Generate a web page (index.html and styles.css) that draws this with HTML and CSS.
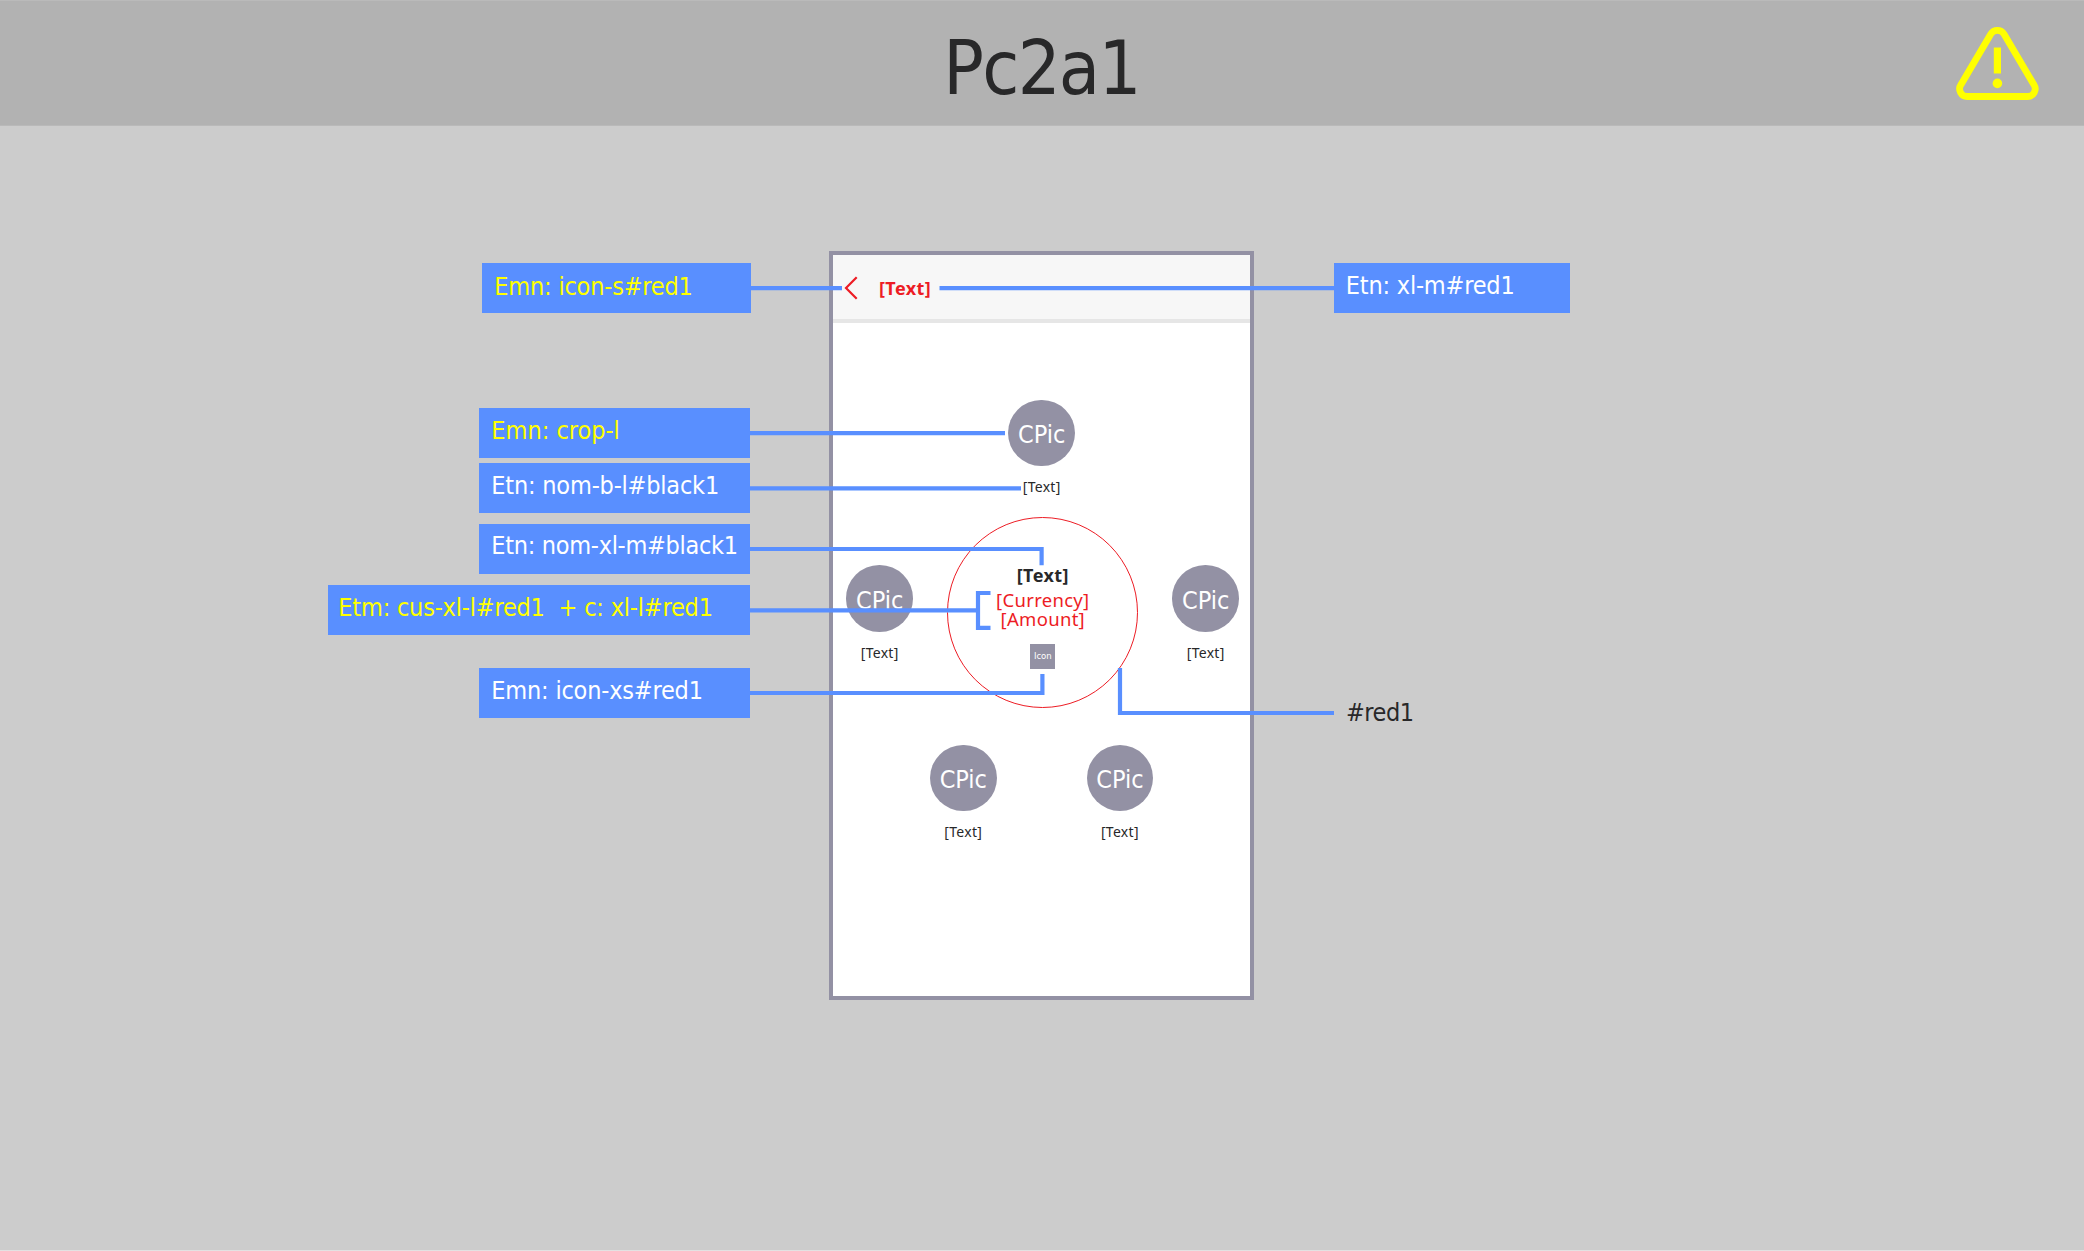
FILE: index.html
```html
<!DOCTYPE html>
<html lang="en">
<head>
<meta charset="utf-8">
<title>Pc2a1</title>
<link rel="stylesheet" href="styles.css">
</head>
<body>
<header class="topbar">
  <h1 class="title">Pc2a1</h1>
  <svg class="warning" viewBox="0 0 84 76" width="84" height="76" aria-label="Warning">
    <path class="warning-frame" d="M5.9 59.7 35.8 9a7.8 7.8 0 0 1 13.2 0L78.9 59.7A7.6 7.6 0 0 1 72.4 71.5H12.4A7.6 7.6 0 0 1 5.9 59.7Z"/>
    <path class="warning-mark" d="M38.8 22.5h7.2v26h-7.2z"/>
    <circle class="warning-mark" cx="42.4" cy="58.4" r="4.8"/>
  </svg>
</header>

<main class="canvas">
  <section class="phone">
    <div class="phone-bar">
      <svg class="back" viewBox="0 0 14 24" width="14" height="24"><path d="M12.7 1.2 2 12l10.7 10.8"/></svg>
      <span class="phone-title">[Text]</span>
    </div>
    <div class="phone-body">
      <div class="contact c-top"><div class="pic">CPic</div><div class="name">[Text]</div></div>
      <div class="contact c-left"><div class="pic">CPic</div><div class="name">[Text]</div></div>
      <div class="contact c-right"><div class="pic">CPic</div><div class="name">[Text]</div></div>
      <div class="contact c-bottom-left"><div class="pic">CPic</div><div class="name">[Text]</div></div>
      <div class="contact c-bottom-right"><div class="pic">CPic</div><div class="name">[Text]</div></div>
      <div class="hub">
        <div class="hub-title">[Text]</div>
        <div class="hub-amount">[Currency]</div>
        <div class="hub-amount">[Amount]</div>
        <div class="hub-icon">Icon</div>
      </div>
    </div>
  </section>

  <svg class="wires" viewBox="0 125 2084 1126" width="2084" height="1126">
    <path d="M750 288.2H842"/>
    <path d="M939.5 288.2H1334"/>
    <path d="M750 433.2H1005"/>
    <path d="M750 488.4H1021"/>
    <path d="M750 549H1041.6V565.3"/>
    <path d="M750 610.4H978"/>
    <path d="M990.5 593H978V627.8H990.5"/>
    <path d="M750 693H1042.4V674"/>
    <path d="M1120 668V713H1334"/>
  </svg>

  <div class="label edit l-back">Emn: icon-s#red1</div>
  <div class="label edit l-crop">Emn: crop-l</div>
  <div class="label l-name">Etn: nom-b-l#black1</div>
  <div class="label l-hub">Etn: nom-xl-m#black1</div>
  <div class="label edit l-amount">Etm: cus-xl-l#red1&nbsp; + c: xl-l#red1</div>
  <div class="label l-icon">Emn: icon-xs#red1</div>
  <div class="label l-title">Etn: xl-m#red1</div>
  <div class="note">#red1</div>
</main>
</body>
</html>
```
FILE: styles.css
```css
* { box-sizing: border-box; }

body {
  margin: 0;
  width: 2084px;
  height: 1251px;
  overflow: hidden;
  display: flex;
  flex-direction: column;
  background: #ccc;
  color: #282829;
  font-family: "DejaVu Sans Condensed", "DejaVu Sans", sans-serif;
  font-stretch: condensed;
}

.topbar {
  position: relative;
  flex: none;
  height: 126px;
  display: flex;
  justify-content: center;
  background: #b2b2b2;
  border-top: 1px solid #bababa;
  border-bottom: 1px solid #b9b9b9;
}

.title {
  margin: 0;
  padding: 22px 1px 0 0;
  font-size: 75px;
  font-weight: 400;
  line-height: 90px;
  letter-spacing: -1.7px;
}

.warning { position: absolute; right: 45px; top: 23.5px; }
.warning-frame { fill: none; stroke: #ff0; stroke-width: 6.8; }
.warning-mark { fill: #ff0; }

.canvas {
  position: relative;
  flex: 1;
  border-bottom: 1px solid #e2e2e2;
}

/* Phone mock-up */
.phone {
  position: absolute;
  left: 829px;
  top: 125px;
  width: 425px;
  height: 749px;
  display: flex;
  flex-direction: column;
  background: #fff;
  border: 4px solid #9391a4;
  font-family: "Noto Sans", sans-serif;
  font-stretch: normal;
}

.phone-bar {
  height: 68px;
  display: flex;
  align-items: center;
  gap: 21px;
  padding: 1px 0 0 11px;
  background: #f7f7f7;
  border-bottom: 4px solid #e6e6e6;
  color: #ed1c24;
}

.back path { fill: none; stroke: #ed1c24; stroke-width: 2.2; }
.phone-title { font-size: 18px; font-weight: 700; letter-spacing: 0.4px; }

.phone-body { position: relative; flex: 1; }

.contact {
  position: absolute;
  width: 66.6px;
  display: flex;
  flex-direction: column;
  align-items: center;
  gap: 11.2px;
}

.c-top { left: 175.4px; top: 76.7px; }
.c-left { left: 13.4px; top: 242px; }
.c-right { left: 339.4px; top: 242px; }
.c-bottom-left { left: 97px; top: 421.6px; }
.c-bottom-right { left: 253.6px; top: 421.6px; }

.pic {
  width: 66.6px;
  height: 66.6px;
  padding-top: 4.6px;
  border-radius: 50%;
  background: #9391a4;
  color: #fff;
  font: condensed 25px/62px "DejaVu Sans Condensed", "DejaVu Sans", sans-serif;
  text-align: center;
}

.name { font-size: 14px; line-height: 20px; letter-spacing: 0.3px; white-space: nowrap; }

.hub {
  position: absolute;
  left: 114.3px;
  top: 194px;
  width: 191px;
  height: 191px;
  padding-top: 44px;
  display: flex;
  flex-direction: column;
  align-items: center;
  border: 1.2px solid #ed1c24;
  border-radius: 50%;
}

.hub-title { font-size: 18px; font-weight: 700; line-height: 26px; margin-bottom: 1.5px; letter-spacing: 0.4px; }
.hub-amount { font-size: 18.5px; line-height: 19px; letter-spacing: 0.3px; color: #ed1c24; }

.hub-icon {
  width: 25px;
  height: 25px;
  margin-top: 16px;
  background: #9391a4;
  color: #fff;
  font: condensed 9.5px/24px "DejaVu Sans Condensed", "DejaVu Sans", sans-serif;
  letter-spacing: -0.1px;
  text-align: center;
}

/* Connectors between labels and elements */
.wires { position: absolute; left: 0; top: -1px; }
.wires path { fill: none; stroke: #598fff; stroke-width: 4.2; }

.label {
  position: absolute;
  left: 479px;
  width: 271px;
  height: 50px;
  padding: 8px 0 0 12.3px;
  background: #598fff;
  color: #fff;
  font-size: 25px;
  line-height: 30px;
  letter-spacing: -0.2px;
  white-space: nowrap;
}

.edit { color: #ff0; }
.l-back { left: 482px; width: 268.5px; top: 137px; padding-top: 9px; }
.l-crop { top: 282px; letter-spacing: 0; }
.l-name { top: 337.3px; }
.l-hub { top: 397.7px; padding-top: 7px; letter-spacing: -0.3px; }
.l-amount { left: 328.3px; width: 421.7px; top: 459px; padding-left: 10px; }
.l-icon { top: 542px; }
.l-title { left: 1333.5px; width: 236.5px; top: 137px; }

.note {
  position: absolute;
  left: 1346px;
  top: 572px;
  font-size: 25px;
  line-height: 30px;
  letter-spacing: -0.5px;
}
```
